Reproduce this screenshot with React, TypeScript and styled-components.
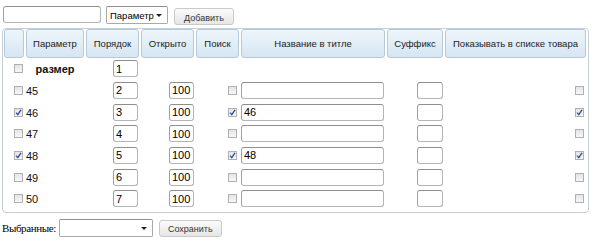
import React from 'react';
import styled, { createGlobalStyle } from 'styled-components';

const Global = createGlobalStyle`
  html, body { margin: 0; padding: 0; background: #fff; }
  body {
    font-family: "Liberation Sans", Arial, sans-serif;
    font-size: 11px;
    color: #000;
  }
  * { box-sizing: border-box; }
`;

const Page = styled.div`
  width: 600px;
  height: 247px;
  padding: 6px 0 0 2px;
  display: flex;
  flex-direction: column;
`;

const Toolbar = styled.div`
  display: flex;
  align-items: flex-start;
  height: 18px;
  padding-left: 1px;
`;

const TextField = styled.input<{ $w: number; $h?: number }>`
  width: ${(p) => p.$w}px;
  height: ${(p) => p.$h ?? 17}px;
  border: 1px solid #b4b4b4;
  border-top-color: #8e8e8e;
  border-left-color: #a0a0a0;
  border-radius: 3px;
  background: #fff;
  padding: 0 2px;
  font-family: "Liberation Sans", Arial, sans-serif;
  font-size: 11px;
  color: #000;
  outline: none;
  margin: 0;
`;

const SelectBox = styled.div<{ $w: number; $ml: number }>`
  position: relative;
  width: ${(p) => p.$w}px;
  height: 18px;
  margin-left: ${(p) => p.$ml}px;
  border: 1px solid #a9a9a9;
  border-top-color: #8e8e8e;
  border-radius: 2px;
  background: #fff;
  display: flex;
  align-items: center;
  padding-left: 3px;
  font-size: 9.5px;
  color: #000;
`;

const Arrow = styled.span`
  position: absolute;
  right: 5px;
  top: 7px;
  width: 0;
  height: 0;
  border-left: 3px solid transparent;
  border-right: 3px solid transparent;
  border-top: 3px solid #222;
`;

const Button = styled.button<{ $w: number; $ml: number; $mt: number }>`
  width: ${(p) => p.$w}px;
  height: 17px;
  margin: ${(p) => p.$mt}px 0 0 ${(p) => p.$ml}px;
  border: 1px solid #c9c9c9;
  border-radius: 3px;
  background: linear-gradient(#fbfbfb, #e6e6e6);
  font-family: "Liberation Sans", Arial, sans-serif;
  font-size: 9px;
  color: #333;
  padding: 2px 0 0;
  line-height: 12px;
  cursor: pointer;
`;

const Panel = styled.div`
  margin-top: 4px;
  width: 587px;
  border: 1px solid #c7cfd6;
  border-radius: 4px;
  padding: 0 2px 2px 1px;
`;

const Grid = styled.div`
  display: grid;
  grid-template-columns: 20px 58px 53px 53px 43px 144px 56px 141px;
  grid-template-rows: 29px;
  grid-auto-rows: 21.67px;
  column-gap: 2px;
`;

const HeadCell = styled.div`
  border: 1px solid #b5c9da;
  border-radius: 3px;
  background: linear-gradient(#eef5fb, #d6e6f2);
  display: flex;
  align-items: center;
  justify-content: center;
  font-size: 9.5px;
  color: #222;
  white-space: nowrap;
`;

const Cell = styled.div<{ $align?: 'start' | 'center' | 'end'; $pr?: number }>`
  display: flex;
  align-items: center;
  justify-content: ${(p) =>
    p.$align === 'start' ? 'flex-start' : p.$align === 'center' ? 'center' : 'flex-end'};
  padding-right: ${(p) => p.$pr ?? 0}px;
  white-space: nowrap;
`;

const Label = styled.span<{ $bold?: boolean }>`
  font-size: 11px;
  font-weight: ${(p) => (p.$bold ? 700 : 400)};
  color: #111;
  margin-top: 1px;
`;

const Box = styled.span`
  width: 9px;
  height: 9px;
  border: 1px solid #b1b1b1;
  background: linear-gradient(#e4e4e4, #f7f7f7);
  display: inline-flex;
  align-items: center;
  justify-content: center;
`;

const Check = ({ on }: { on?: boolean }) => (
  <Box>
    {on && (
      <svg width="7" height="7" viewBox="0 0 7 7">
        <path d="M1 3.6 L2.8 5.6 L6 0.8" fill="none" stroke="#2d4f9a" strokeWidth="1.3" />
      </svg>
    )}
  </Box>
);

const Footer = styled.div`
  margin-top: 6px;
  display: flex;
  align-items: flex-start;
  margin-left: -2px;
`;

const FooterLabel = styled.span`
  font-family: "Liberation Serif", "Times New Roman", serif;
  font-size: 11px;
  letter-spacing: -0.4px;
  color: #000;
  margin-top: 3px;
  padding-left: 2px;
`;

const rows = [
  { label: '45', order: 2, on: false },
  { label: '46', order: 3, on: true },
  { label: '47', order: 4, on: false },
  { label: '48', order: 5, on: true },
  { label: '49', order: 6, on: false },
  { label: '50', order: 7, on: false },
];

const headers = ['', 'Параметр', 'Порядок', 'Открыто', 'Поиск', 'Название в титле', 'Суффикс', 'Показывать в списке товара'];

export default function App() {
  return (
    <Page>
      <Global />
      <Toolbar>
        <TextField $w={98} defaultValue="" />
        <SelectBox $w={62} $ml={5}>
          Параметр
          <Arrow />
        </SelectBox>
        <Button $w={60} $ml={6} $mt={2}>Добавить</Button>
      </Toolbar>
      <Panel>
        <Grid>
          {headers.map((h, i) => (
            <HeadCell key={i}>{h}</HeadCell>
          ))}
          <Cell $pr={1}><Check /></Cell>
          <Cell $align="center"><Label $bold>размер</Label></Cell>
          <Cell $pr={1}><TextField $w={25} defaultValue="1" /></Cell>
          <Cell /><Cell /><Cell /><Cell /><Cell />
          {rows.map((r) => (
            <React.Fragment key={r.label}>
              <Cell $pr={1}><Check on={r.on} /></Cell>
              <Cell $align="start"><Label>{r.label}</Label></Cell>
              <Cell $pr={1}><TextField $w={25} defaultValue={String(r.order)} /></Cell>
              <Cell><TextField $w={25} defaultValue="100" /></Cell>
              <Cell $pr={2}><Check on={r.on} /></Cell>
              <Cell $align="start"><TextField $w={143} defaultValue={r.on ? r.label : ''} /></Cell>
              <Cell><TextField $w={26} defaultValue="" /></Cell>
              <Cell $pr={2}><Check on={r.on} /></Cell>
            </React.Fragment>
          ))}
        </Grid>
      </Panel>
      <Footer>
        <FooterLabel>Выбранные:</FooterLabel>
        <SelectBox $w={94} $ml={3}>
          <Arrow />
        </SelectBox>
        <Button $w={63} $ml={6} $mt={1}>Сохранить</Button>
      </Footer>
    </Page>
  );
}
